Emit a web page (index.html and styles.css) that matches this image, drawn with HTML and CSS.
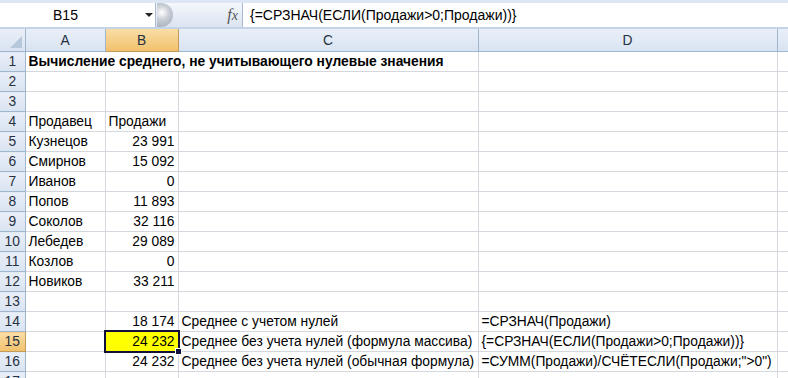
FILE: index.html
```html
<!DOCTYPE html>
<html lang="ru">
<head>
    <meta charset="UTF-8">
    <title>Вычисление среднего</title>
    <link rel="stylesheet" href="styles.css">
</head>
<body>
    <div class="formula-bar">
        <div class="name-box">
            <span class="name">B15</span>
            <span class="arrow"></span>
        </div>
        <div class="fx-area">
            <span class="knob"></span>
            <span class="fx"><i>f</i>x</span>
        </div>
        <div class="formula">{=СРЗНАЧ(ЕСЛИ(Продажи&gt;0;Продажи))}</div>
    </div>

    <table class="sheet">
        <colgroup>
            <col class="c-head">
            <col class="c-a">
            <col class="c-b">
            <col class="c-c">
            <col class="c-d">
            <col>
        </colgroup>
        <tr class="cols">
            <th class="corner"><span class="tri"></span></th>
            <th>A</th>
            <th class="active">B</th>
            <th>C</th>
            <th>D</th>
            <th></th>
        </tr>
        <tr><th>1</th><td colspan="3" class="title">Вычисление среднего, не учитывающего нулевые значения</td><td></td><td></td></tr>
        <tr><th>2</th><td></td><td></td><td></td><td></td><td></td></tr>
        <tr><th>3</th><td></td><td></td><td></td><td></td><td></td></tr>
        <tr><th>4</th><td>Продавец</td><td>Продажи</td><td></td><td></td><td></td></tr>
        <tr><th>5</th><td>Кузнецов</td><td class="num">23 991</td><td></td><td></td><td></td></tr>
        <tr><th>6</th><td>Смирнов</td><td class="num">15 092</td><td></td><td></td><td></td></tr>
        <tr><th>7</th><td>Иванов</td><td class="num">0</td><td></td><td></td><td></td></tr>
        <tr><th>8</th><td>Попов</td><td class="num">11 893</td><td></td><td></td><td></td></tr>
        <tr><th>9</th><td>Соколов</td><td class="num">32 116</td><td></td><td></td><td></td></tr>
        <tr><th>10</th><td>Лебедев</td><td class="num">29 089</td><td></td><td></td><td></td></tr>
        <tr><th>11</th><td>Козлов</td><td class="num">0</td><td></td><td></td><td></td></tr>
        <tr><th>12</th><td>Новиков</td><td class="num">33 211</td><td></td><td></td><td></td></tr>
        <tr><th>13</th><td></td><td></td><td></td><td></td><td></td></tr>
        <tr><th>14</th><td></td><td class="num">18 174</td><td>Среднее с учетом нулей</td><td>=СРЗНАЧ(Продажи)</td><td></td></tr>
        <tr><th class="active">15</th><td></td><td class="num selected">24 232<span class="frame"><span class="handle"></span></span></td><td>Среднее без учета нулей (формула массива)</td><td>{=СРЗНАЧ(ЕСЛИ(Продажи&gt;0;Продажи))}</td><td></td></tr>
        <tr><th>16</th><td></td><td class="num">24 232</td><td>Среднее без учета нулей (обычная формула)</td><td>=СУММ(Продажи)/СЧЁТЕСЛИ(Продажи;"&gt;0")</td><td></td></tr>
        <tr><th>17</th><td></td><td></td><td></td><td></td><td></td></tr>
    </table>
</body>
</html>
```

FILE: styles.css
```css
body {
    margin: 0;
    font-family: 'Liberation Sans', Arial, sans-serif;
    font-size: 14px;
    color: #000;
    background: #fff;
    overflow: hidden;
}
.formula-bar {
    display: flex;
    height: 24px;
    border-top: 3px solid #dce6f4;
    border-bottom: 2px solid #c5d3e6;
    background: #dfe8f5;
}
.name-box {
    width: 155px;
    background: #fff;
    border-right: 1px solid #a7b8d0;
    display: flex;
    align-items: center;
}
.name {
    flex: 1;
    text-align: center;
    padding-right: 14px;
}
.arrow {
    width: 0;
    height: 0;
    border-left: 4px solid transparent;
    border-right: 4px solid transparent;
    border-top: 4px solid #222;
    margin-right: 2px;
}
.fx-area {
    width: 86px;
    background: linear-gradient(#f4f7fc, #dbe4f1);
    display: flex;
    align-items: center;
    justify-content: space-between;
    border-right: 1px solid #a7b8d0;
}
.knob {
    width: 16px;
    height: 24px;
    border-radius: 0 12px 12px 0;
    background: radial-gradient(circle at 30% 40%, #fff 0, #c9ced6 40%, #9ea7b4 100%);
    margin-left: 1px;
}
.fx {
    font-family: 'Liberation Serif', serif;
    font-style: italic;
    font-size: 14px;
    color: #555;
    margin-right: 4px;
}
.fx i {
    font-size: 16px;
}
.formula {
    flex: 1;
    background: #fff;
    line-height: 24px;
    padding-left: 7px;
}
.sheet {
    border-collapse: collapse;
    table-layout: fixed;
    width: 800px;
    font-size: 13.8px;
}
.c-head { width: 25px; }
.c-a { width: 80px; }
.c-b { width: 73px; }
.c-c { width: 300px; }
.c-d { width: 299px; }
.sheet td,
.sheet th {
    height: 19px;
    padding: 0 3px;
    border: 1px solid #d4d8de;
    white-space: nowrap;
    overflow: visible;
    line-height: 19px;
    vertical-align: bottom;
}
.sheet th {
    font-weight: normal;
    background: linear-gradient(#e9eff8, #d9e3f1);
    border-color: #9eb6ce;
    color: #27313f;
    text-align: center;
    padding: 0;
    vertical-align: middle;
}
.cols th {
    border-top: none;
    height: 22px;
}
.sheet tr th:first-child {
    border-left: none;
}
.sheet th.active {
    background: linear-gradient(#f9dda6, #f2c16d);
    border-color: #c29b57;
}
.corner {
    position: relative;
}
.tri {
    position: absolute;
    right: 3px;
    bottom: 3px;
    width: 0;
    height: 0;
    border-left: 12px solid transparent;
    border-bottom: 12px solid #b8c8dc;
}
.title {
    font-weight: bold;
}
.num {
    text-align: right;
}
.selected {
    background: #ffff00;
    position: relative;
}
.frame {
    position: absolute;
    left: -2px;
    top: -2px;
    right: -2px;
    bottom: -2px;
    border: 2px solid #10103a;
}
.handle {
    position: absolute;
    right: -4px;
    bottom: -4px;
    width: 5px;
    height: 5px;
    background: #10103a;
    border: 1px solid #fff;
}
```
